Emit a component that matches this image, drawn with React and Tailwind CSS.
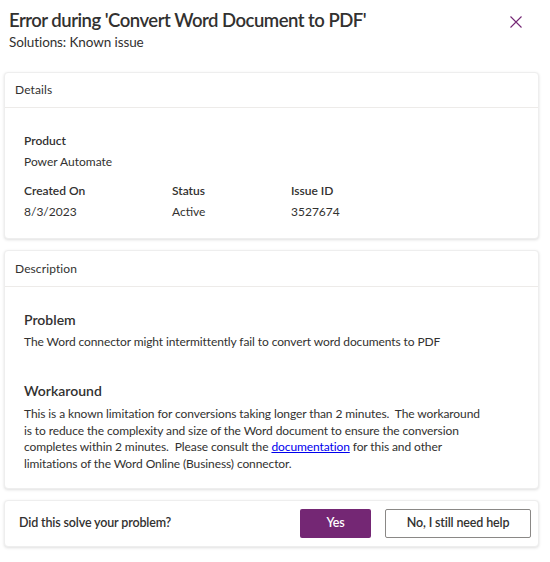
import React from "react"

const font = { fontFamily: 'Lato, "Open Sans", sans-serif' }

function Card({ children, className = "" }) {
  return (
    <div className={`ml-[4px] w-[535px] bg-white rounded-[4px] border border-[#eeeeee] shadow-[0_1px_3px_rgba(0,0,0,0.13)] ${className}`}>
      {children}
    </div>
  )
}

function CardHeader({ title, h }) {
  return (
    <div className={`${h} px-[10px] flex items-center border-b border-[#edebe9] text-[12px] tracking-[0.1px] text-[#323130]`}>
      {title}
    </div>
  )
}

function Field({ label, value, width }) {
  return (
    <div className={width}>
      <div className="text-[12px] leading-[21px] font-semibold text-[#323130]">{label}</div>
      <div className="text-[12px] leading-[21px] text-[#323130]">{value}</div>
    </div>
  )
}

const workaround = [
  "This is a known limitation for conversions taking longer than 2 minutes.\u00a0 The workaround",
  "is to reduce the complexity and size of the Word document to ensure the conversion",
]

export default function App() {
  return (
    <div style={font} className="w-[550px] h-[562px] bg-white text-[#323130] overflow-hidden">
      <div className="flex justify-between pt-[7px] pl-[9px] pr-[28px]">
        <div>
          <div className="text-[18.5px] leading-[26px] font-semibold tracking-[-0.5px]">
            Error during 'Convert Word Document to PDF'
          </div>
          <div className="text-[13.5px] leading-[18px] tracking-[-0.1px]">Solutions: Known issue</div>
        </div>
        <button className="mt-[9px] h-[12px] w-[12px]">
          <svg width="12" height="12" viewBox="0 0 12 12">
            <path d="M0.5 0.5 L11.5 11.5 M11.5 0.5 L0.5 11.5" stroke="#742774" strokeWidth="1.1" fill="none" />
          </svg>
        </button>
      </div>

      <div className="mt-[21px] flex flex-col gap-[11px]">
        <Card>
          <CardHeader title="Details" h="h-[35px]" />
          <div className="px-[19px] pt-[22px] pb-[16px]">
            <Field label="Product" value="Power Automate" />
            <div className="flex mt-[8px]">
              <Field label="Created On" value="8/3/2023" width="w-[148px]" />
              <Field label="Status" value="Active" width="w-[119px]" />
              <Field label="Issue ID" value="3527674" />
            </div>
          </div>
        </Card>

        <Card>
          <CardHeader title="Description" h="h-[36px]" />
          <div className="px-[19px] pt-[22px] pb-[15px]">
            <div className="text-[14px] leading-[22px] font-semibold">Problem</div>
            <div className="text-[12px] leading-[20px] mt-[1px] tracking-[-0.1px]">
              The Word connector might intermittently fail to convert word documents to PDF
            </div>
            <div className="text-[14px] leading-[22px] font-semibold mt-[28px]">Workaround</div>
            <div className="text-[12px] leading-[16.7px] mt-[4px] tracking-[-0.1px]">
              {workaround.map((line) => (
                <div key={line}>{line}</div>
              ))}
              <div>
                completes within 2 minutes.{"\u00a0 "}Please consult the{" "}
                <a href="#" className="text-[#0000ee] underline">documentation</a> for this and other
              </div>
              <div>limitations of the Word Online (Business) connector.</div>
            </div>
          </div>
        </Card>

        <Card className="h-[47px] flex items-center justify-between pl-[14px] pr-[7px]">
          <div className="text-[12.5px] font-semibold tracking-[-0.15px] text-[#323130]">Did this solve your problem?</div>
          <div className="flex gap-[14px]">
            <button className="w-[71px] h-[29px] rounded-[2px] bg-[#742774] text-white text-[12.5px] font-semibold tracking-[-0.15px]">
              Yes
            </button>
            <button className="w-[146px] h-[29px] rounded-[2px] border border-[#8a8886] bg-white text-[#323130] text-[12.5px] font-semibold tracking-[-0.15px]">
              No, I still need help
            </button>
          </div>
        </Card>
      </div>
    </div>
  )
}
